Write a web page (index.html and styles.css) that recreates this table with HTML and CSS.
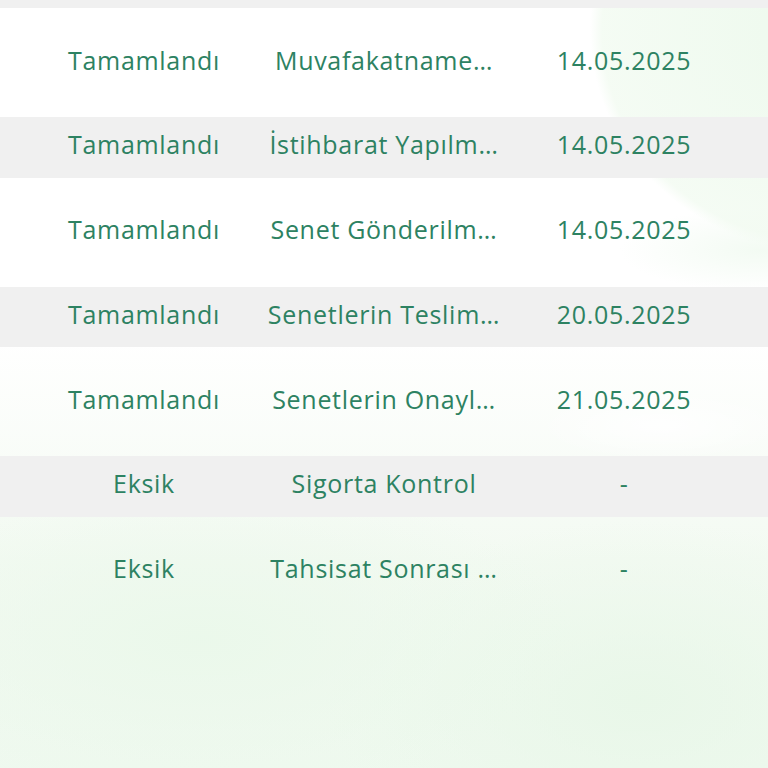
FILE: index.html
```html
<!DOCTYPE html>
<html lang="tr">
<head>
<meta charset="utf-8">
<title>Durum Listesi</title>
<link rel="stylesheet" href="styles.css">
</head>
<body>
<div class="page">
  <div class="row row-gray row-partial"></div>
  <div class="row"><span class="cell">Tamamlandı</span><span class="cell">Muvafakatname…</span><span class="cell">14.05.2025</span></div>
  <div class="row row-gray"><span class="cell">Tamamlandı</span><span class="cell">İstihbarat Yapılm…</span><span class="cell">14.05.2025</span></div>
  <div class="row"><span class="cell">Tamamlandı</span><span class="cell">Senet Gönderilm…</span><span class="cell">14.05.2025</span></div>
  <div class="row row-gray"><span class="cell">Tamamlandı</span><span class="cell">Senetlerin Teslim…</span><span class="cell">20.05.2025</span></div>
  <div class="row"><span class="cell">Tamamlandı</span><span class="cell">Senetlerin Onayl…</span><span class="cell">21.05.2025</span></div>
  <div class="row row-gray"><span class="cell">Eksik</span><span class="cell">Sigorta Kontrol</span><span class="cell">-</span></div>
  <div class="row"><span class="cell">Eksik</span><span class="cell">Tahsisat Sonrası …</span><span class="cell">-</span></div>
</div>
</body>
</html>
```
FILE: styles.css
```css
html, body {
  margin: 0;
  padding: 0;
}
body {
  width: 768px;
  height: 768px;
  overflow: hidden;
  font-family: "Open Sans", "Liberation Sans", sans-serif;
  color: #2d8262;
  background:
    radial-gradient(ellipse 300px 280px at 830px 30px, rgba(236, 249, 236, 0.95) 0%, rgba(242, 251, 241, 0.8) 76%, rgba(255,255,255,0) 80%),
    radial-gradient(ellipse 200px 60px at 760px 250px, rgba(240, 250, 240, 0.8), rgba(255,255,255,0) 70%),
    radial-gradient(ellipse 180px 50px at 660px 425px, rgba(255,255,255,0.9), rgba(255,255,255,0) 70%),
    radial-gradient(ellipse 500px 220px at 200px 640px, rgba(234, 248, 234, 0.9), rgba(255,255,255,0) 75%),
    radial-gradient(ellipse 420px 240px at 640px 700px, rgba(232, 247, 232, 0.9), rgba(255,255,255,0) 75%),
    linear-gradient(180deg, #ffffff 0px, #ffffff 340px, #f3faf2 560px, #eff9ef 768px);
}
.page {
  display: flex;
  flex-direction: column;
  gap: 24.25px;
}
.row {
  display: grid;
  grid-template-columns: repeat(3, 240px);
  padding: 0 24px 6px;
  box-sizing: border-box;
  height: 60.5px;
  align-items: center;
  font-size: 25px;
  font-weight: 400;
  letter-spacing: 0.7px;
}
.row-gray {
  background: #f0f0f0;
}
.row-partial {
  height: 8px;
  padding: 0;
}
.cell {
  text-align: center;
  white-space: nowrap;
  overflow: hidden;
}
```
